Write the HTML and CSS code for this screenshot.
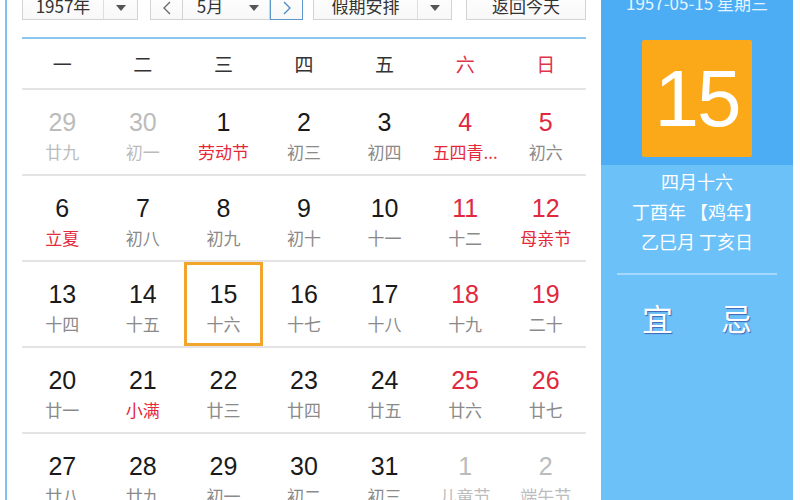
FILE: index.html
```html
<!DOCTYPE html>
<html lang="zh-CN">
<head>
<meta charset="utf-8">
<title>万年历</title>
<link rel="stylesheet" href="styles.css">
</head>
<body>
<div class="wrap">
  <div class="main">
    <div class="toolbar">
      <div class="sel year"><span class="sel-text">1957年</span><span class="sel-arrow"><i class="tri"></i></span></div>
      <div class="month-group">
        <div class="btn nav prev"><svg width="10" height="14" viewBox="0 0 10 14"><path d="M8 1 L2 7 L8 13" fill="none" stroke="#666" stroke-width="1.3"/></svg></div>
        <div class="sel month"><span class="sel-text">5月</span><span class="sel-arrow noline"><i class="tri"></i></span></div>
        <div class="btn nav next"><svg width="10" height="14" viewBox="0 0 10 14"><path d="M2 1 L8 7 L2 13" fill="none" stroke="#4a86c8" stroke-width="1.3"/></svg></div>
      </div>
      <div class="sel holiday"><span class="sel-text">假期安排</span><span class="sel-arrow"><i class="tri"></i></span></div>
      <div class="btn today">返回今天</div>
    </div>
    <div class="blue-line"></div>
    <div class="week">
      <div>一</div><div>二</div><div>三</div><div>四</div><div>五</div><div class="red">六</div><div class="red">日</div>
    </div>
    <div class="row">
      <div class="cell other"><div class="num">29</div><div class="lunar">廿九</div></div>
      <div class="cell other"><div class="num">30</div><div class="lunar">初一</div></div>
      <div class="cell"><div class="num">1</div><div class="lunar fest">劳动节</div></div>
      <div class="cell"><div class="num">2</div><div class="lunar">初三</div></div>
      <div class="cell"><div class="num">3</div><div class="lunar">初四</div></div>
      <div class="cell wkend"><div class="num">4</div><div class="lunar fest">五四青...</div></div>
      <div class="cell wkend"><div class="num">5</div><div class="lunar">初六</div></div>
    </div>
    <div class="row">
      <div class="cell"><div class="num">6</div><div class="lunar fest">立夏</div></div>
      <div class="cell"><div class="num">7</div><div class="lunar">初八</div></div>
      <div class="cell"><div class="num">8</div><div class="lunar">初九</div></div>
      <div class="cell"><div class="num">9</div><div class="lunar">初十</div></div>
      <div class="cell"><div class="num">10</div><div class="lunar">十一</div></div>
      <div class="cell wkend"><div class="num">11</div><div class="lunar">十二</div></div>
      <div class="cell wkend"><div class="num">12</div><div class="lunar fest">母亲节</div></div>
    </div>
    <div class="row">
      <div class="cell"><div class="num">13</div><div class="lunar">十四</div></div>
      <div class="cell"><div class="num">14</div><div class="lunar">十五</div></div>
      <div class="cell selected"><div class="num">15</div><div class="lunar">十六</div></div>
      <div class="cell"><div class="num">16</div><div class="lunar">十七</div></div>
      <div class="cell"><div class="num">17</div><div class="lunar">十八</div></div>
      <div class="cell wkend"><div class="num">18</div><div class="lunar">十九</div></div>
      <div class="cell wkend"><div class="num">19</div><div class="lunar">二十</div></div>
    </div>
    <div class="row">
      <div class="cell"><div class="num">20</div><div class="lunar">廿一</div></div>
      <div class="cell"><div class="num">21</div><div class="lunar fest">小满</div></div>
      <div class="cell"><div class="num">22</div><div class="lunar">廿三</div></div>
      <div class="cell"><div class="num">23</div><div class="lunar">廿四</div></div>
      <div class="cell"><div class="num">24</div><div class="lunar">廿五</div></div>
      <div class="cell wkend"><div class="num">25</div><div class="lunar">廿六</div></div>
      <div class="cell wkend"><div class="num">26</div><div class="lunar">廿七</div></div>
    </div>
    <div class="row">
      <div class="cell"><div class="num">27</div><div class="lunar">廿八</div></div>
      <div class="cell"><div class="num">28</div><div class="lunar">廿九</div></div>
      <div class="cell"><div class="num">29</div><div class="lunar">初一</div></div>
      <div class="cell"><div class="num">30</div><div class="lunar">初二</div></div>
      <div class="cell"><div class="num">31</div><div class="lunar">初三</div></div>
      <div class="cell other"><div class="num">1</div><div class="lunar">儿童节</div></div>
      <div class="cell other"><div class="num">2</div><div class="lunar">端午节</div></div>
    </div>
  </div>
  <div class="panel">
    <div class="panel-top">
      <div class="date-line">1957-05-15 星期三</div>
      <div class="big-day">15</div>
    </div>
    <div class="panel-bottom">
      <div class="info">四月十六</div>
      <div class="info">丁酉年 【鸡年】</div>
      <div class="info">乙巳月 丁亥日</div>
      <div class="sep"></div>
      <div class="yiji"><span>宜</span><span>忌</span></div>
    </div>
  </div>
</div>
</body>
</html>
```

FILE: styles.css
```css
* { box-sizing: border-box; }
html, body { margin: 0; padding: 0; background: #fff; overflow: hidden; }
body {
  font-family: "Noto Sans CJK SC", "Liberation Sans", sans-serif;
  color: #222;
  width: 800px;
  height: 500px;
}
.wrap { display: flex; height: 500px; }

.main {
  margin-left: 5px;
  border-left: 2px solid #80bff0;
  padding-left: 15px;
  padding-right: 14px;
  width: 595px;
  flex: none;
}

/* toolbar */
.toolbar {
  display: flex;
  height: 32px;
  margin-top: -12px;
}
.sel, .btn {
  height: 32px;
  border: 1px solid #d3d3d3;
  background: linear-gradient(#fff, #f8f8f8);
  display: flex;
  align-items: center;
  font-size: 17px;
  color: #333;
}
.sel-text {
  flex: 1;
  text-align: center;
  line-height: 30px;
  padding-top: 3px;
}
.sel-arrow {
  height: 100%;
  border-left: 1px solid #dedede;
  display: flex;
  align-items: center;
  justify-content: center;
}
.sel-arrow.noline { border-left-color: transparent; }
.tri {
  display: block;
  width: 0;
  height: 0;
  border-left: 5px solid transparent;
  border-right: 5px solid transparent;
  border-top: 6px solid #555;
  margin-top: 8px;
}
.year { width: 116px; }
.year .sel-arrow { width: 34px; }
.month-group { display: flex; margin-left: 12px; }
.nav { width: 32px; justify-content: center; padding-top: 8px; }
.prev { border-right: none; }
.month { width: 88px; }
.month .sel-arrow { width: 32px; }
.next { width: 33px; border: 1px solid #5f97cf; }
.holiday { width: 139px; margin-left: 10px; }
.holiday .sel-arrow { width: 34px; }
.today {
  width: 120px;
  margin-left: 14px;
  justify-content: center;
  line-height: 30px;
  padding-top: 3px;
}

.blue-line {
  margin-top: 17px;
  height: 2px;
  background: #8cc8ee;
}

/* week header */
.week {
  display: grid;
  grid-template-columns: repeat(7, 1fr);
  height: 51px;
  border-bottom: 2px solid #e4e4e4;
}
.week div {
  text-align: center;
  font-size: 19px;
  line-height: 49px;
  color: #333;
}
.week .red { color: #e0344a; }

/* day rows */
.row {
  display: grid;
  grid-template-columns: repeat(7, 1fr);
  height: 86px;
  border-bottom: 2px solid #e4e4e4;
}
.cell {
  text-align: center;
  padding-top: 19px;
}
.num {
  font-family: "Liberation Sans", Arial, sans-serif;
  font-size: 25px;
  line-height: 26px;
  color: #1a1a1a;
}
.lunar {
  margin-top: 7px;
  font-size: 17px;
  line-height: 20px;
  color: #8a8a8a;
}
.lunar.fest { color: #e4283a; }
.wkend .num { color: #e0283e; }
.other .num, .other .lunar { color: #bcbcbc; }
.cell.selected {
  border: 3px solid #f2a52d;
  margin: 0 1px;
  padding-top: 16px;
}

/* right panel */
.panel {
  width: 192px;
  margin-left: 1px;
  flex: none;
  display: flex;
  flex-direction: column;
  background: #6dc1f9;
}
.panel-top {
  background: #4cadf5;
  height: 165px;
  display: flex;
  flex-direction: column;
  align-items: center;
}
.date-line {
  margin-top: -8px;
  font-size: 17px;
  line-height: 22px;
  color: #e6f4ff;
  white-space: nowrap;
}
.big-day {
  margin-top: 26px;
  width: 110px;
  height: 117px;
  background: #fba918;
  border-radius: 2px;
  color: #fff;
  font-family: "Liberation Sans", Arial, sans-serif;
  font-size: 80px;
  line-height: 117px;
  text-align: center;
  letter-spacing: -2px;
}
.panel-bottom {
  flex: 1;
  padding-top: 1px;
  text-align: center;
  color: #fff;
}
.info {
  font-size: 18px;
  line-height: 30px;
  white-space: nowrap;
}
.sep {
  margin: 17px 16px 0;
  height: 2px;
  background: #a4d9fc;
}
.yiji {
  margin-top: 23px;
  display: flex;
  justify-content: center;
  gap: 48px;
  font-size: 31px;
  line-height: 40px;
  text-shadow: 1px 1px 1px #3f64b8;
}
```
